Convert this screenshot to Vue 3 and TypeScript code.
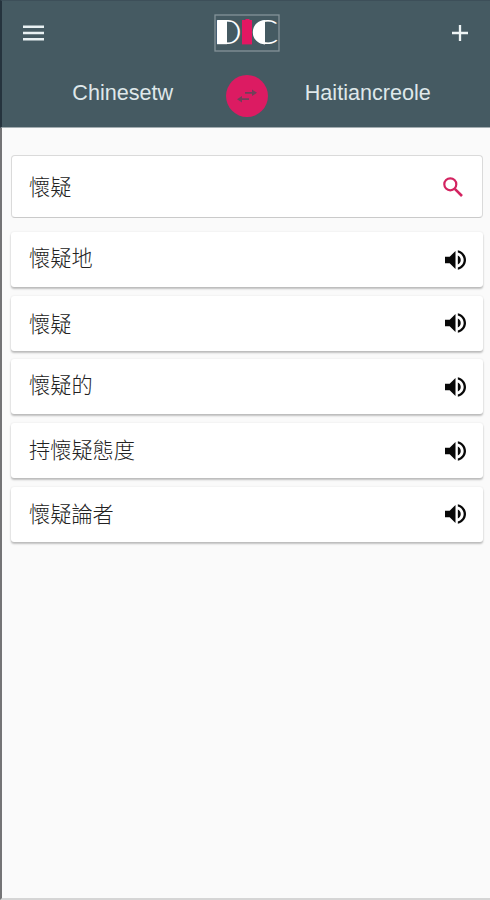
<script setup lang="ts">
import { ref } from 'vue'

interface Entry {
  text: string
  shift: number
}

const source = ref<string>('Chinesetw')
const target = ref<string>('Haitiancreole')
const query = ref<string>('懷疑')
const entries: Entry[] = [
  { text: '懷疑地', shift: -3 },
  { text: '懷疑', shift: 0 },
  { text: '懷疑的', shift: -3 },
  { text: '持懷疑態度', shift: -2 },
  { text: '懷疑論者', shift: -1 },
]

function swap(): void {
  const previous = source.value
  source.value = target.value
  target.value = previous
}
</script>

<template>
  <div class="screen">
    <header class="header">
      <div class="bar">
        <svg class="menu" viewBox="0 0 22 16">
          <path d="M0 1.5h22M0 8h22M0 14.5h22" stroke="#e9f1f3" stroke-width="2.5" />
        </svg>
        <svg class="logo" viewBox="0 0 66 38">
          <rect x="1" y="1" width="64" height="36" fill="none" stroke="#849399" stroke-width="1.3" />
          <rect x="3" y="6.2" width="10" height="24" fill="#fff" />
          <text class="letter" x="-0.5" y="30.2" textLength="28.5" lengthAdjust="spacingAndGlyphs">D</text>
          <rect x="28" y="6" width="10" height="24.4" fill="#e21762" />
          <text class="letter accent" x="28.8" y="30" textLength="8.5" lengthAdjust="spacingAndGlyphs">I</text>
          <path d="M51 6a12.2 12.2 0 0 0 0 24.4z" fill="#fff" />
          <text class="letter" x="38" y="30.2" textLength="26.5" lengthAdjust="spacingAndGlyphs">C</text>
        </svg>
        <svg class="plus" viewBox="0 0 16 16">
          <path d="M0 8h16M8 0v16" stroke="#eef4f5" stroke-width="2.3" />
        </svg>
      </div>
      <div class="languages">
        <span class="language">{{ source }}</span>
        <button class="swap" @click="swap">
          <svg viewBox="0 0 20 14">
            <path d="M8 2.9h7V.5l5 3.3-5 3.2V4.8H8zM12 9.2H5V7L0 10.2l5 3.3v-2.4h7z" fill="#704059" />
          </svg>
        </button>
        <span class="language">{{ target }}</span>
      </div>
    </header>
    <main class="content">
      <div class="card search">
        <span class="word">{{ query }}</span>
        <svg class="find" viewBox="0 0 20 20">
          <circle cx="7.3" cy="7.3" r="6" fill="none" stroke="#d32360" stroke-width="2.2" />
          <path d="M11.8 11.8l7.2 7.2" stroke="#d32360" stroke-width="2.6" />
        </svg>
      </div>
      <div v-for="entry in entries" :key="entry.text" class="card entry">
        <span class="word" :style="{ transform: `translateY(${entry.shift}px)` }">{{ entry.text }}</span>
        <svg class="speaker" viewBox="3 3 18 18" preserveAspectRatio="none">
          <path
            d="M3 9v6h4l5 5V4L7 9H3zm13.5 3c0-1.77-1.02-3.29-2.5-4.03v8.05c1.48-.73 2.5-2.25 2.5-4.02zM14 3.23v2.06c2.89.86 5 3.54 5 6.71s-2.11 5.85-5 6.71v2.06c4.01-.91 7-4.49 7-8.77s-2.99-7.86-7-8.77z"
            fill="#080808"
          />
        </svg>
      </div>
    </main>
  </div>
</template>

<style>
body {
  margin: 0;
  background: #fafafa;
}
</style>

<style scoped>
.screen {
  box-sizing: border-box;
  height: 900px;
  border-left: 2px solid #747476;
  border-bottom: 2px solid #d5d5d5;
  background: #fafafa;
  font-family: "Liberation Sans", "Noto Sans CJK TC", sans-serif;
}

.header {
  box-sizing: border-box;
  height: 128px;
  margin-left: -2px;
  border-left: 2px solid #25333d;
  border-top: 1px solid #3d4f59;
  border-bottom: 1px solid #a3adb1;
  background: #455a62;
}

.bar {
  box-sizing: border-box;
  display: grid;
  grid-template-columns: 1fr 66px 1fr;
  align-items: center;
  height: 64px;
  padding: 0 22px 0 21px;
}

.menu {
  width: 21px;
  height: 16px;
  margin-top: -1px;
}

.logo {
  width: 66px;
  height: 38px;
  margin-left: 1px;
  overflow: visible;
}

.letter {
  fill: #fff;
  font-family: Lato, "Liberation Sans", sans-serif;
  font-size: 33.5px;
  font-weight: 300;
}

.accent {
  fill: #e21762;
  font-weight: 700;
}

.plus {
  width: 16px;
  height: 16px;
  margin-top: -1px;
  justify-self: end;
}

.languages {
  display: grid;
  grid-template-columns: 1fr 42px 1fr;
  align-items: center;
  height: 62px;
  padding-left: 1px;
}

.language {
  margin-top: -7px;
  color: #dfe8ea;
  font-size: 21.6px;
  line-height: 28px;
  text-align: center;
}

.language:first-child {
  padding-left: 17px;
}

.language:last-child {
  padding-right: 22px;
}

.swap {
  display: flex;
  align-items: center;
  justify-content: center;
  width: 42px;
  height: 42px;
  padding: 0;
  border: 0;
  border-radius: 50%;
  background: #dc1b62;
}

.swap svg {
  width: 20px;
  height: 14px;
}

.content {
  padding: 27px 7px 0 9px;
}

.card {
  box-sizing: border-box;
  display: flex;
  align-items: center;
  justify-content: space-between;
  background: #fff;
}

.search {
  height: 63px;
  margin-bottom: 14px;
  padding: 0 19px 0 17px;
  border: 1px solid #dadada;
  border-bottom-color: #cacaca;
  border-radius: 4px;
}

.search .word {
  margin-top: -2px;
}

.entry {
  height: 55px;
  margin-bottom: 8.7px;
  padding: 0 17px 0 18px;
  border-radius: 3px;
  box-shadow: 0 2px 2px rgba(0, 0, 0, 0.23), 0 0 2px rgba(0, 0, 0, 0.1);
}

.word {
  color: #222;
  font-family: "Noto Sans CJK TC", sans-serif;
  font-size: 21.2px;
  font-weight: 300;
  line-height: 30px;
}

.find {
  width: 20px;
  height: 20px;
}

.speaker {
  width: 21px;
  height: 20px;
}
</style>
